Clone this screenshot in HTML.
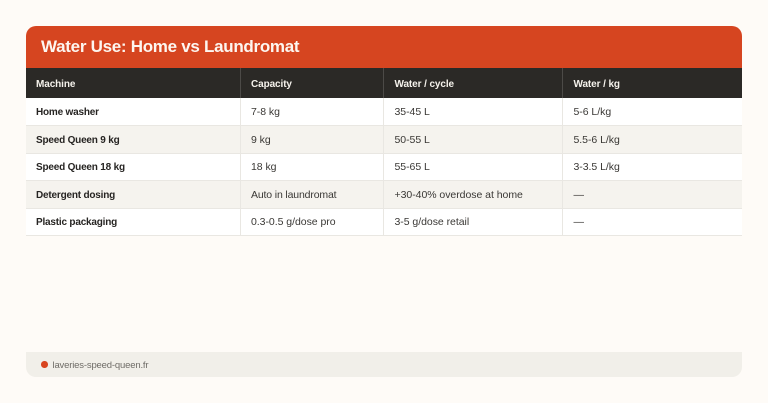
<!DOCTYPE html>
<html><head><meta charset="utf-8"><style>
html,body{margin:0;padding:0}
body{width:768px;height:403px;background:#fefbf7;position:relative;overflow:hidden;font-family:"Liberation Sans",sans-serif}
.b{position:absolute}
.t{position:absolute;white-space:nowrap;font-size:10.5px;line-height:14px;color:#3a3835;letter-spacing:-.04px}
.h{font-size:10px;color:#f5f2ec;font-weight:700;letter-spacing:-.1px}
.n{font-size:10px;color:#262422;font-weight:700;letter-spacing:-.2px}
</style></head><body>
<div class="b" style="left:26px;top:25.5px;width:716px;height:42.5px;background:#d64520;border-radius:10px 10px 0 0"></div>
<div class="t" style="left:41px;top:36px;font-size:17px;line-height:22px;font-weight:700;color:#fdf6f0;letter-spacing:-.29px">Water Use: Home vs Laundromat</div>
<div class="b" style="left:26px;top:68px;width:716px;height:29.5px;background:#2b2926"></div>
<div class="b" style="left:26px;top:97.5px;width:716px;height:27.5px;background:#fff"></div>
<div class="b" style="left:26px;top:125.5px;width:716px;height:27px;background:#f5f3ee"></div>
<div class="b" style="left:26px;top:153px;width:716px;height:27px;background:#fff"></div>
<div class="b" style="left:26px;top:180.5px;width:716px;height:27px;background:#f5f3ee"></div>
<div class="b" style="left:26px;top:208px;width:716px;height:27px;background:#fff"></div>
<div class="b" style="left:26px;top:125px;width:716px;height:1px;background:#e9e7e2"></div>
<div class="b" style="left:26px;top:152.5px;width:716px;height:1px;background:#e9e7e2"></div>
<div class="b" style="left:26px;top:180px;width:716px;height:1px;background:#e9e7e2"></div>
<div class="b" style="left:26px;top:207.5px;width:716px;height:1px;background:#e9e7e2"></div>
<div class="b" style="left:26px;top:235px;width:716px;height:1px;background:#e9e7e2"></div>
<div class="b" style="left:240px;top:68px;width:1px;height:29.5px;background:#4c4a47"></div>
<div class="b" style="left:383px;top:68px;width:1px;height:29.5px;background:#4c4a47"></div>
<div class="b" style="left:562px;top:68px;width:1px;height:29.5px;background:#4c4a47"></div>
<div class="b" style="left:240px;top:97.5px;width:1px;height:138px;background:#e9e7e2"></div>
<div class="b" style="left:383px;top:97.5px;width:1px;height:138px;background:#e9e7e2"></div>
<div class="b" style="left:562px;top:97.5px;width:1px;height:138px;background:#e9e7e2"></div>

<div class="t h" style="left:36px;top:78px">Machine</div>
<div class="t h" style="left:251px;top:78px">Capacity</div>
<div class="t h" style="left:394.5px;top:78px">Water / cycle</div>
<div class="t h" style="left:573.5px;top:78px">Water / kg</div>

<div class="t n" style="left:36px;top:106px">Home washer</div>
<div class="t" style="left:251px;top:105px">7-8 kg</div>
<div class="t" style="left:394.5px;top:105px">35-45 L</div>
<div class="t" style="left:573.5px;top:105px">5-6 L/kg</div>

<div class="t n" style="left:36px;top:134px">Speed Queen 9 kg</div>
<div class="t" style="left:251px;top:133px">9 kg</div>
<div class="t" style="left:394.5px;top:133px">50-55 L</div>
<div class="t" style="left:573.5px;top:133px">5.5-6 L/kg</div>

<div class="t n" style="left:36px;top:161px">Speed Queen 18 kg</div>
<div class="t" style="left:251px;top:160px">18 kg</div>
<div class="t" style="left:394.5px;top:160px">55-65 L</div>
<div class="t" style="left:573.5px;top:160px">3-3.5 L/kg</div>

<div class="t n" style="left:36px;top:189px">Detergent dosing</div>
<div class="t" style="left:251px;top:188px;letter-spacing:-.15px">Auto in laundromat</div>
<div class="t" style="left:394.5px;top:188px">+30-40% overdose at home</div>
<div class="t" style="left:573.5px;top:188px">—</div>

<div class="t n" style="left:36px;top:216px">Plastic packaging</div>
<div class="t" style="left:251px;top:215px">0.3-0.5 g/dose pro</div>
<div class="t" style="left:394.5px;top:215px">3-5 g/dose retail</div>
<div class="t" style="left:573.5px;top:215px">—</div>

<div class="b" style="left:26px;top:352px;width:716px;height:25px;background:#f1efe9;border-radius:0 0 10px 10px"></div>
<div class="b" style="left:41px;top:361px;width:6.5px;height:6.5px;background:#d84520;border-radius:50%"></div>
<div class="t" style="left:52.5px;top:359px;font-size:9.5px;color:#6f6c67;letter-spacing:-.17px">laveries-speed-queen.fr</div>
</body></html>
